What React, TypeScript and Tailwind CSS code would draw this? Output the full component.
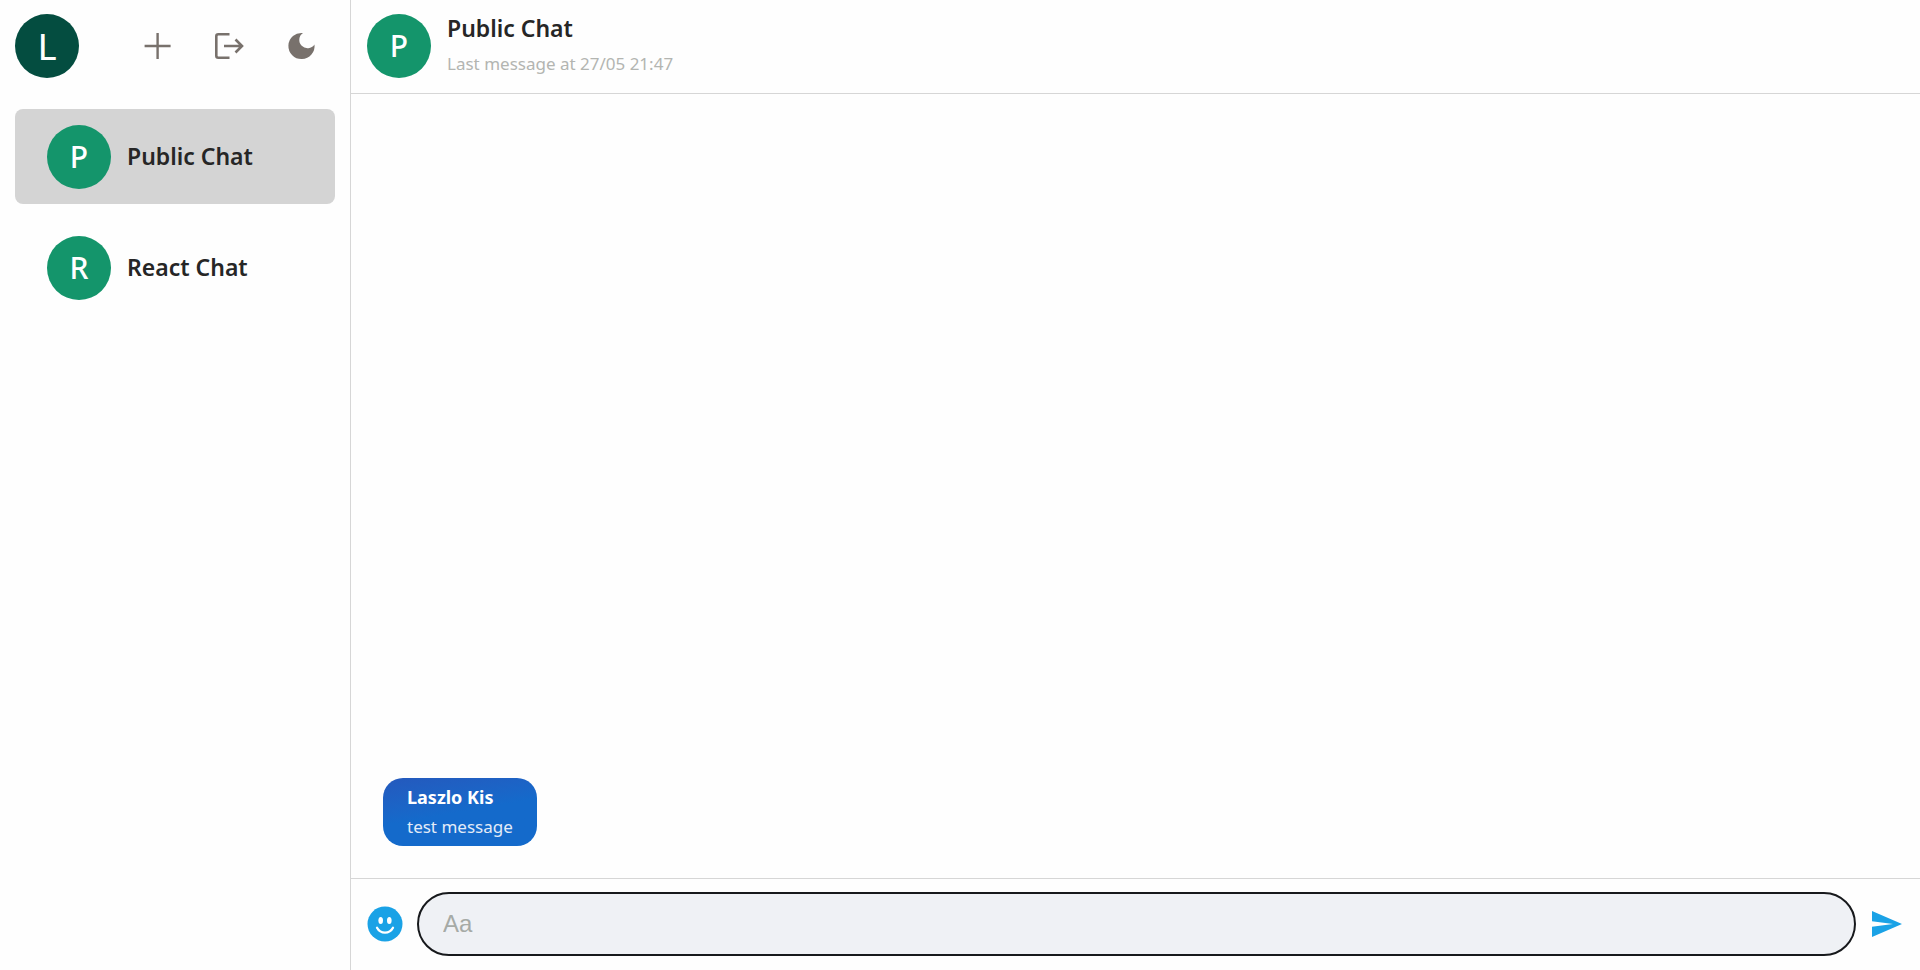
import React from "react";

import clsx from "clsx";

type AvatarProps = {
  letter: string;
  className?: string;
};

const Avatar = ({ letter, className = "bg-[#14956b] text-[30px] font-medium" }: AvatarProps) => {
  return (
    <div
      className={clsx(
        "flex size-16 shrink-0 items-center justify-center rounded-full leading-none text-white",
        className
      )}
    >
      {letter}
    </div>
  );
};

const PlusIcon = () => (
  <svg viewBox="0 0 36 36" className="size-9" fill="none" stroke="currentColor" strokeWidth="2.4">
    <path d="M17.6 5v26M4.6 18h26" />
  </svg>
);

const LogoutIcon = () => (
  <svg viewBox="0 0 36 36" className="size-9" fill="none" stroke="currentColor" strokeWidth="2.6">
    <path d="M17.5 6.3H6.3Q4.3 6.3 4.3 8.3V27.7Q4.3 29.7 6.3 29.7H17.5" />
    <path d="M12 18h18M23.5 11.5l6.5 6.5l-6.5 6.5" />
  </svg>
);

const MoonIcon = () => (
  <svg viewBox="0 0 36 36" className="size-9" fill="currentColor">
    <path d="M19 5A8.3 8.3 0 1 0 30.5 16.5A13.1 13.1 0 1 1 19 5Z" />
  </svg>
);

const SmileIcon = () => (
  <svg viewBox="0 0 36 36" className="size-9">
    <circle cx="18" cy="18" r="17.5" fill="#1aa2e6" />
    <ellipse cx="13.7" cy="14.6" rx="2.3" ry="3.5" fill="white" />
    <ellipse cx="22.3" cy="14.6" rx="2.3" ry="3.5" fill="white" />
    <path
      d="M10 21.8C13.5 28.3 22.5 28.3 26 21.8"
      fill="none"
      stroke="white"
      strokeWidth="2.3"
      strokeLinecap="round"
    />
  </svg>
);

const SendIcon = () => (
  <svg viewBox="0 0 32 32" className="size-8" fill="#1aa2e6">
    <path d="M2 3L32 16L2 29V18.7L23 16L2 13.3Z" />
  </svg>
);

const rooms = [
  { name: "Public Chat", active: true },
  { name: "React Chat", active: false },
];

const Sidebar = () => {
  return (
    <aside className="flex w-[351px] shrink-0 flex-col border-r border-[#d6d6d6]">
      <div className="flex h-[93px] items-center justify-between pr-[30px] pb-[2px] pl-[15px]">
        <Avatar letter="L" className="bg-[#044d40] font-['Lato',sans-serif] text-4xl" />
        <div className="flex gap-9 text-[#78716c]">
          <button type="button" aria-label="New room">
            <PlusIcon />
          </button>
          <button type="button" aria-label="Log out">
            <LogoutIcon />
          </button>
          <button type="button" aria-label="Dark mode">
            <MoonIcon />
          </button>
        </div>
      </div>
      <nav className="flex flex-col gap-4 px-[15px] pt-4">
        {rooms.map(({ name, active }) => (
          <a
            key={name}
            href="#"
            className={clsx(
              "flex h-[95px] items-center gap-4 rounded-lg px-8 text-[23px] font-semibold",
              active && "bg-[#d4d4d4]"
            )}
          >
            <Avatar letter={name[0]} />
            {name}
          </a>
        ))}
      </nav>
    </aside>
  );
};

const App = () => {
  return (
    <div className="flex min-h-screen bg-[#fefefe] font-['Noto_Sans',sans-serif] text-[#262626]">
      <Sidebar />
      <main className="flex grow flex-col">
        {/* Room header */}
        <header className="flex h-[94px] items-center gap-4 border-b border-[#d6d6d6] px-4 pb-[2px]">
          <Avatar letter="P" />
          <div>
            <h1 className="text-[23px] leading-9 font-semibold">Public Chat</h1>
            <p className="text-[17px] leading-9 text-[#b3b5b1]">Last message at 27/05 21:47</p>
          </div>
        </header>

        {/* Messages */}
        <section className="flex grow flex-col items-start justify-end px-8 pb-8">
          <div className="rounded-[20px] bg-linear-170 from-[#2459bd] to-[#146acb] to-50% px-6 py-1 text-white">
            <p className="text-lg leading-[30px] font-bold">Laszlo Kis</p>
            <p className="text-[17px] leading-[30px] text-[#e3ecf8]">test message</p>
          </div>
        </section>

        {/* Message box */}
        <form className="flex h-[92px] items-center gap-[14px] border-t border-[#d6d6d6] pr-[18px] pb-px pl-4">
          <button type="button" aria-label="Emoji">
            <SmileIcon />
          </button>
          <input
            type="text"
            aria-label="Message"
            placeholder="Aa"
            className="h-16 min-w-0 grow rounded-full border-2 border-[#17191c] bg-[#eff1f5] px-6 font-['Liberation_Sans',sans-serif] text-2xl outline-none placeholder:text-[#a6aaa6]"
          />
          <button type="button" aria-label="Send">
            <SendIcon />
          </button>
        </form>
      </main>
    </div>
  );
};

export default App;
